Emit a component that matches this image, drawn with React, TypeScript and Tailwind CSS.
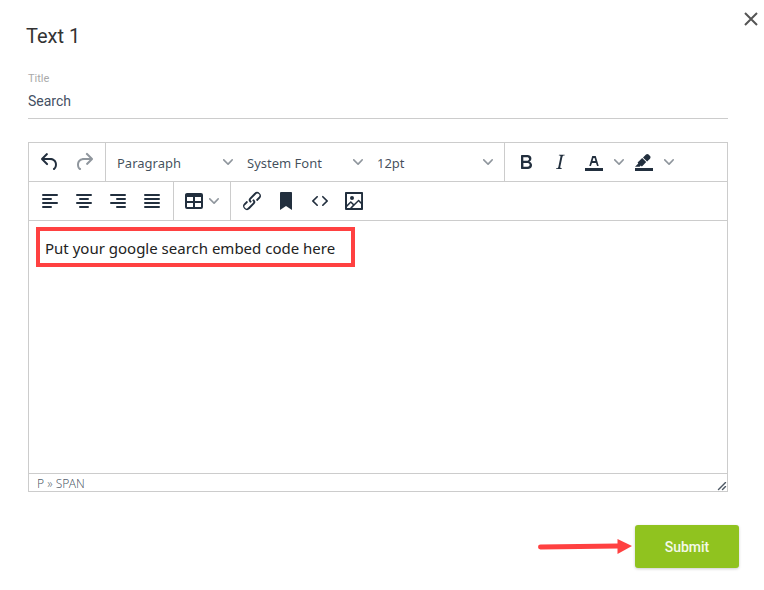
import type { ReactNode } from "react";

const UI_FONT = "font-['Noto_Sans','Open_Sans',sans-serif]";

function Icon({ children }: { children: ReactNode }) {
  return (
    <svg width="24" height="24" viewBox="0 0 24 24" fill="currentColor" aria-hidden="true">
      {children}
    </svg>
  );
}

function Chevron() {
  return (
    <svg width="10" height="10" viewBox="0 0 10 10" fill="currentColor" aria-hidden="true">
      <path d="M8.7 2.2c.3-.3.8-.3 1 0 .4.4.4.9 0 1.2L5.7 7.8c-.3.3-.9.3-1.2 0L.2 3.4a.8.8 0 0 1 0-1.2c.3-.3.8-.3 1.1 0L5 6l3.7-3.8z" />
    </svg>
  );
}

function ToolButton({ label, disabled, children }: { label: string; disabled?: boolean; children: ReactNode }) {
  return (
    <button
      type="button"
      aria-label={label}
      disabled={disabled}
      className="flex size-[34px] items-center justify-center disabled:opacity-50"
    >
      <Icon>{children}</Icon>
    </button>
  );
}

function SplitButton({ label, children }: { label: string; children: ReactNode }) {
  return (
    <div className="flex">
      <ToolButton label={label}>{children}</ToolButton>
      <button
        type="button"
        aria-label={`${label} options`}
        className="flex w-4 items-center justify-center opacity-50"
      >
        <Chevron />
      </button>
    </div>
  );
}

function ToolSelect({ label, value }: { label: string; value: string }) {
  return (
    <div className="relative flex h-[34px] w-[130px] items-center">
      <select
        aria-label={label}
        defaultValue={value}
        className="h-full w-full appearance-none bg-transparent pt-[3px] pl-[7px] text-[13px] text-[#222f3e]/85 outline-none"
      >
        <option>{value}</option>
      </select>
      <span className="pointer-events-none absolute right-[7px] opacity-50">
        <Chevron />
      </span>
    </div>
  );
}

function Group({ last, children }: { last?: boolean; children: ReactNode }) {
  return (
    <div className={last ? "flex items-center px-1" : "flex items-center border-r border-[#cccccc] px-1"}>
      {children}
    </div>
  );
}

function Editor() {
  return (
    <section
      aria-label="Rich text editor"
      className={`border border-[#cccccc] text-[#222f3e] ${UI_FONT}`}
    >
      <div role="toolbar" aria-label="Formatting" className="flex h-[39px] border-b border-[#cccccc]">
        <Group>
          <ToolButton label="Undo">
            <path d="M6.4 8H12c3.7 0 6.2 2 6.8 5.1.6 2.7-.4 5.6-2.3 6.8a1 1 0 0 1-1-1.8c1.1-.6 1.8-2.7 1.4-4.6-.5-2.1-2.1-3.5-4.9-3.5H6.4l3.3 3.3a1 1 0 1 1-1.4 1.4l-5-5a1 1 0 0 1 0-1.4l5-5a1 1 0 0 1 1.4 1.4L6.4 8z" />
          </ToolButton>
          <ToolButton label="Redo" disabled>
            <path d="M17.6 10H12c-2.8 0-4.4 1.4-4.9 3.5-.4 2 .3 4 1.4 4.6a1 1 0 1 1-1 1.8c-2-1.2-2.9-4.1-2.3-6.8.6-3 3-5.1 6.8-5.1h5.6l-3.3-3.3a1 1 0 1 1 1.4-1.4l5 5a1 1 0 0 1 0 1.4l-5 5a1 1 0 0 1-1.4-1.4l3.3-3.3z" />
          </ToolButton>
        </Group>
        <Group>
          <ToolSelect label="Block format" value="Paragraph" />
          <ToolSelect label="Font" value="System Font" />
          <ToolSelect label="Font size" value="12pt" />
        </Group>
        <Group last>
          <ToolButton label="Bold">
            <path d="M7.8 19c-.3 0-.5 0-.6-.2l-.2-.5V5.7c0-.2 0-.4.2-.5l.6-.2h5c1.5 0 2.7.3 3.5 1 .7.6 1.1 1.4 1.1 2.5a3 3 0 0 1-.6 1.9c-.4.6-1 1-1.6 1.2.4.1.9.3 1.3.6s.8.7 1 1.2c.4.4.5 1 .5 1.6 0 1.3-.4 2.3-1.3 3-.8.7-2.1 1-3.8 1H7.8zm5-8.3c.6 0 1.2-.1 1.6-.5.4-.3.6-.7.6-1.3 0-1.1-.8-1.7-2.3-1.7H9.3v3.5h3.4zm.5 6c.7 0 1.3-.1 1.7-.4.4-.4.6-.9.6-1.5s-.2-1-.7-1.4c-.4-.3-1-.4-2-.4H9.4v3.8h4z" />
          </ToolButton>
          <ToolButton label="Italic">
            <path d="M16.7 4.7l-.1.9h-.3c-.6 0-1 0-1.4.3-.3.3-.4.6-.5 1.1l-2.1 9.8v.6c0 .5.4.8 1.4.8h.2l-.2.8H8l.2-.8h.2c1.1 0 1.8-.5 2-1.5l2-9.8.1-.5c0-.6-.4-.8-1.4-.8h-.3l.2-.9h5.8z" />
          </ToolButton>
          <SplitButton label="Text color">
            <path d="M3 18h18v3H3z" />
            <path d="M8.7 16h-.8a.5.5 0 0 1-.5-.6l2.7-9c.1-.3.3-.4.5-.4h2.8c.2 0 .4.1.5.4l2.7 9a.5.5 0 0 1-.5.6h-.8a.5.5 0 0 1-.4-.4l-.7-2.2c0-.3-.3-.4-.5-.4h-3.4c-.2 0-.4.1-.5.4l-.7 2.2c0 .3-.2.4-.4.4zm2.6-7.6l-.6 2a.5.5 0 0 0 .5.6h1.6a.5.5 0 0 0 .5-.6l-.6-2c0-.3-.3-.4-.5-.4h-.4c-.2 0-.4.1-.5.4z" />
          </SplitButton>
          <SplitButton label="Background color">
            <path d="M3 18h18v3H3z" />
            <path d="M7.7 16.7H3l3.3-3.3-.7-.8L10.2 8l4 4.1-4 4.2c-.2.2-.6.2-.8 0l-.6-.7-1.1 1.1zm5-7.5L11 7.4l3-2.9a2 2 0 0 1 2.6 0L18 6c.7.7.7 2 0 2.7l-2.9 2.9-1.8-1.8-.5-.6z" />
          </SplitButton>
        </Group>
      </div>

      <div role="toolbar" aria-label="Layout and insert" className="flex h-[39px] border-b border-[#cccccc]">
        <Group>
          <ToolButton label="Align left">
            <path d="M5 5h14a1 1 0 0 1 0 2H5a1 1 0 1 1 0-2zm0 4h8a1 1 0 0 1 0 2H5a1 1 0 1 1 0-2zm0 8h8a1 1 0 0 1 0 2H5a1 1 0 0 1 0-2zm0-4h14a1 1 0 0 1 0 2H5a1 1 0 0 1 0-2z" />
          </ToolButton>
          <ToolButton label="Align center">
            <path d="M5 5h14a1 1 0 0 1 0 2H5a1 1 0 1 1 0-2zm3 4h8a1 1 0 0 1 0 2H8a1 1 0 1 1 0-2zm0 8h8a1 1 0 0 1 0 2H8a1 1 0 0 1 0-2zm-3-4h14a1 1 0 0 1 0 2H5a1 1 0 0 1 0-2z" />
          </ToolButton>
          <ToolButton label="Align right">
            <path d="M5 5h14a1 1 0 0 1 0 2H5a1 1 0 1 1 0-2zm6 4h8a1 1 0 0 1 0 2h-8a1 1 0 0 1 0-2zm0 8h8a1 1 0 0 1 0 2h-8a1 1 0 0 1 0-2zm-6-4h14a1 1 0 0 1 0 2H5a1 1 0 0 1 0-2z" />
          </ToolButton>
          <ToolButton label="Justify">
            <path d="M5 5h14a1 1 0 0 1 0 2H5a1 1 0 1 1 0-2zm0 4h14a1 1 0 0 1 0 2H5a1 1 0 1 1 0-2zm0 4h14a1 1 0 0 1 0 2H5a1 1 0 0 1 0-2zm0 4h14a1 1 0 0 1 0 2H5a1 1 0 0 1 0-2z" />
          </ToolButton>
        </Group>
        <Group>
          <button type="button" aria-label="Table" className="flex h-[34px] w-12 items-center gap-[3px] pl-1">
            <Icon>
              <path d="M19 4a2 2 0 0 1 2 2v12a2 2 0 0 1-2 2H5a2 2 0 0 1-2-2V6c0-1.1.9-2 2-2h14zM5 14v4h6v-4H5zm14 0h-6v4h6v-4zm0-6h-6v4h6V8zM5 12h6V8H5v4z" fillRule="evenodd" />
            </Icon>
            <span className="opacity-50">
              <Chevron />
            </span>
          </button>
        </Group>
        <Group last>
          <ToolButton label="Insert link">
            <path d="M6.2 12.3a1 1 0 0 1 1.4 1.4l-2.1 2a2 2 0 1 0 2.7 2.8l4.8-4.8a1 1 0 0 0 0-1.4 1 1 0 1 1 1.4-1.3 2.9 2.9 0 0 1 0 4L9.6 20a3.9 3.9 0 0 1-5.5-5.5l2-2zm11.6-.6a1 1 0 0 1-1.4-1.4l2-2a2 2 0 1 0-2.6-2.8L11 10.3a1 1 0 0 0 0 1.4A1 1 0 1 1 9.6 13a2.9 2.9 0 0 1 0-4L14.4 4a3.9 3.9 0 0 1 5.5 5.5l-2 2z" />
          </ToolButton>
          <ToolButton label="Anchor">
            <path d="M6 4v17l6-4 6 4V4c0-.6-.4-1-1-1H7a1 1 0 0 0-1 1z" />
          </ToolButton>
          <ToolButton label="Source code">
            <path d="M9.8 15.7c.3.3.3.8 0 1-.3.4-.9.4-1.2 0l-4.4-4.1a.8.8 0 0 1 0-1.2l4.4-4.2c.3-.3.9-.3 1.2 0 .3.3.3.8 0 1.1L6 12l3.8 3.7zM14.2 15.7c-.3.3-.3.8 0 1 .4.4.9.4 1.2 0l4.4-4.1c.3-.3.3-.9 0-1.2l-4.4-4.2a.8.8 0 0 0-1.2 0c-.3.3-.3.8 0 1.1L18 12l-3.8 3.7z" />
          </ToolButton>
          <ToolButton label="Insert image">
            <path d="M5 15.7l3.3-3.2c.3-.3.7-.3 1 0L12 15l4.1-4c.3-.4.8-.4 1 0l2 1.9V5H5v10.7zM5 18V19h3l2.8-2.9-2-2L5 17.9zm14-3l-2.5-2.4-6.4 6.5H19v-4zM4 3h16c.6 0 1 .4 1 1v16c0 .6-.4 1-1 1H4a1 1 0 0 1-1-1V4c0-.6.4-1 1-1zm6 8a2 2 0 1 0 0-4 2 2 0 0 0 0 4z" fillRule="evenodd" />
          </ToolButton>
        </Group>
      </div>

      <div className="relative">
        <textarea
          aria-label="Content"
          defaultValue="Put your google search embed code here"
          className="block h-[252px] w-full resize-none px-4 py-[15px] text-[15px] leading-6 text-[#222222] outline-none"
        />
        <div className="pointer-events-none absolute top-[6px] left-[7px] h-10 w-[319px] border-4 border-[#ff4141]" />
      </div>

      <div className="flex h-[18px] items-center justify-between border-t border-[#cccccc] pl-2 text-xs leading-4 font-light text-[#222f3e]/80">
        <span className="pt-[2px]">P » SPAN</span>
        <svg width="10" height="10" viewBox="0 0 10 10" fill="currentColor" aria-hidden="true" className="self-end">
          <path d="M8.1 1.1A.5.5 0 1 1 9 2l-7 7A.5.5 0 1 1 1 8l7-7zM8.1 5.1A.5.5 0 1 1 9 6l-3 3A.5.5 0 1 1 5 8l3-3z" />
        </svg>
      </div>
    </section>
  );
}

export default function App() {
  return (
    <main className="min-h-screen bg-white font-['Roboto',sans-serif]">
      <form onSubmit={(e) => e.preventDefault()}>
        <header className="flex h-[73px] items-start justify-between pr-[6px] pl-[26px]">
          <h1 className="mt-6 text-xl leading-6 text-[#333333]">Text 1</h1>
          <button type="button" aria-label="Close" className="mt-3 flex size-[14px] items-center justify-center text-[#555555]">
            <svg width="14" height="14" viewBox="0 0 14 14" fill="none" stroke="currentColor" strokeWidth="2" aria-hidden="true">
              <path d="M1 1l12 12M13 1L1 13" />
            </svg>
          </button>
        </header>

        <div className="pr-9 pl-7">
          <div className="mb-[23px] flex flex-col border-b border-[#cccccc]">
            <label htmlFor="title" className="text-[11px] leading-3 text-[#aaaaaa]">
              Title
            </label>
            <input
              id="title"
              defaultValue="Search"
              className="h-[33px] w-full pb-[2px] text-sm text-[#444f63] outline-none"
            />
          </div>
          <Editor />
        </div>

        <div className="mt-[33px] flex items-center justify-end gap-[3px] pr-[25px]">
          <svg width="94" height="16" viewBox="0 0 94 16" aria-hidden="true">
            <path d="M2.5 8L80 7" stroke="#ff4141" strokeWidth="5" strokeLinecap="round" />
            <path d="M79.500 0V15L94 7z" fill="#ff4141" />
          </svg>
          <button
            type="submit"
            className="h-[43px] w-[104px] rounded-[3px] bg-[#90c31f] text-sm font-medium text-white/90 shadow-[0_1px_3px_rgba(0,0,0,0.2)]"
          >
            Submit
          </button>
        </div>
      </form>
    </main>
  );
}
